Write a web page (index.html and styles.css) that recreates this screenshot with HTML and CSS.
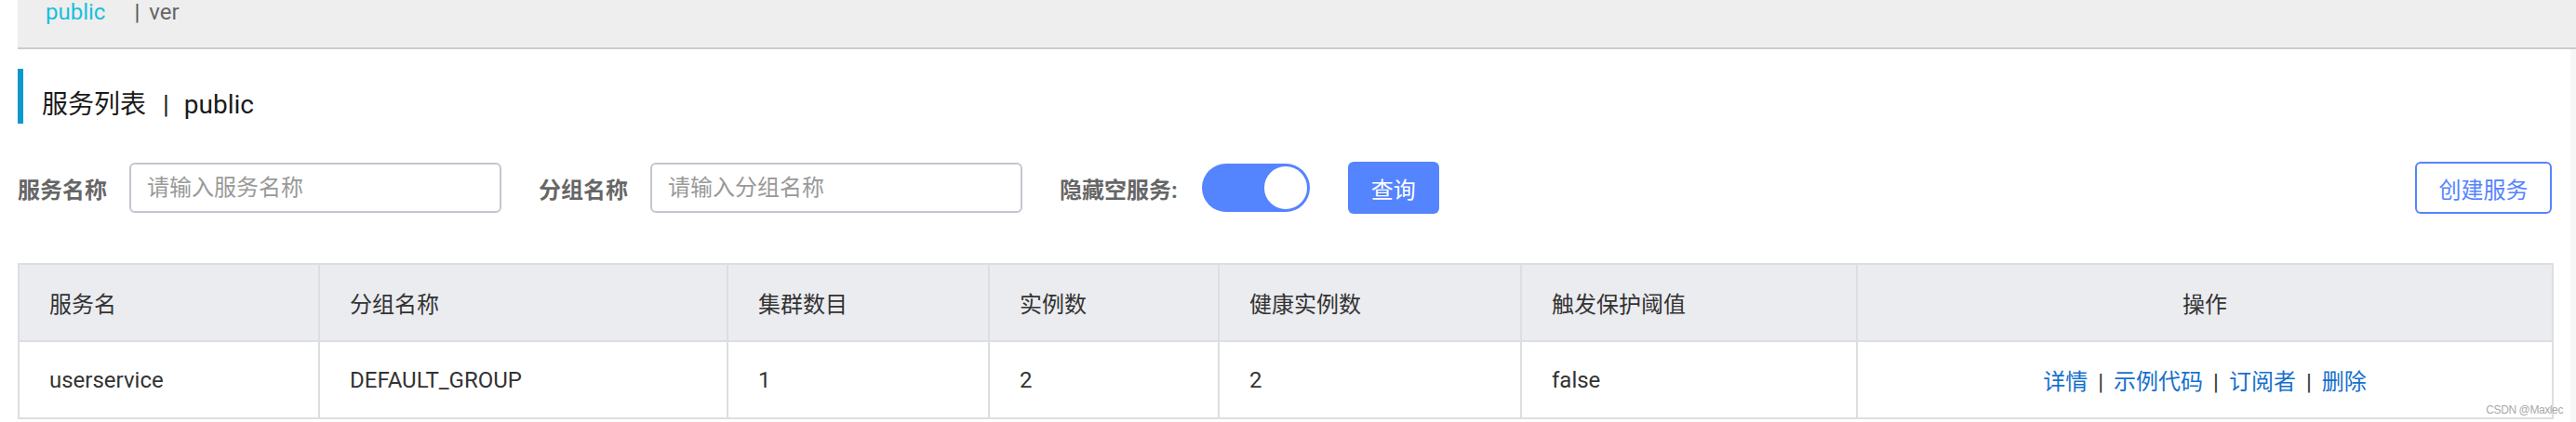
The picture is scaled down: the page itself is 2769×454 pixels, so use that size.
FILE: index.html
```html
<!DOCTYPE html>
<html lang="zh-CN">
<head>
<meta charset="utf-8">
<title>服务列表</title>
<link rel="stylesheet" href="styles.css">
</head>
<body>
<div class="topbar">
  <span class="ns-active">public</span><span class="ns-sep">|</span><span class="ns-item">ver</span>
</div>
<main class="page">
  <h1 class="page-title"><span>服务列表</span><span class="title-sep">|</span><span>public</span></h1>
  <div class="filters">
    <label class="f-label">服务名称</label>
    <input class="f-input" type="text" placeholder="请输入服务名称">
    <label class="f-label f-gap">分组名称</label>
    <input class="f-input" type="text" placeholder="请输入分组名称">
    <label class="f-label f-gap">隐藏空服务:</label>
    <span class="switch"><span class="knob"></span></span>
    <button class="btn-primary">查询</button>
    <span class="spacer"></span>
    <button class="btn-outline">创建服务</button>
  </div>
  <table class="svc-table">
    <colgroup>
      <col class="c1"><col class="c2"><col class="c3"><col class="c4"><col class="c5"><col class="c6"><col class="c7">
    </colgroup>
    <thead>
      <tr>
        <th>服务名</th><th>分组名称</th><th>集群数目</th><th>实例数</th><th>健康实例数</th><th>触发保护阈值</th><th class="center">操作</th>
      </tr>
    </thead>
    <tbody>
      <tr>
        <td>userservice</td><td>DEFAULT_GROUP</td><td>1</td><td>2</td><td>2</td><td>false</td>
        <td class="center"><a class="op">详情</a><span class="op-sep">|</span><a class="op">示例代码</a><span class="op-sep">|</span><a class="op">订阅者</a><span class="op-sep">|</span><a class="op">删除</a></td>
      </tr>
    </tbody>
  </table>
</main>
<div class="watermark">CSDN @Maxlec</div>
<div class="edge"></div>
</body>
</html>
```
FILE: styles.css
```css
html, body {
  margin: 0;
  padding: 0;
  background: #fff;
}
body {
  font-family: Roboto, "Noto Sans CJK SC", sans-serif;
  color: #333;
  width: 2769px;
  height: 454px;
  overflow: hidden;
  position: relative;
}
.topbar {
  margin-left: 19px;
  height: 51px;
  background: #eeeeee;
  border-bottom: 2px solid #cccccc;
  padding-left: 30px;
  font-size: 24px;
  line-height: 26px;
  box-sizing: content-box;
}
.ns-active { color: #19bfdc; }
.ns-sep { color: #555; margin-left: 31px; }
.ns-item { color: #666; margin-left: 10px; }

.page {
  padding: 0 26px 0 19px;
}
.page-title {
  margin: 21px 0 0 0;
  height: 59px;
  box-sizing: border-box;
  border-left: 6px solid #0a98cf;
  padding: 22px 0 0 20px;
  font-size: 28px;
  line-height: 34px;
  font-weight: normal;
  color: #1a1a1a;
  display: flex;
}
.title-sep { margin: 0 16px 0 18px; }

.filters {
  margin-top: 41px;
  height: 56px;
  display: flex;
  align-items: center;
}
.f-label {
  font-size: 24px;
  font-weight: 700;
  color: #666;
  margin-right: 24px;
  white-space: nowrap;
}
.f-gap { margin-left: 40px; }
.f-input {
  width: 400px;
  height: 54px;
  box-sizing: border-box;
  border: 2px solid #c4c6cf;
  border-radius: 6px;
  padding: 0 17px;
  font-size: 24px;
  font-family: Roboto, "Noto Sans CJK SC", sans-serif;
  color: #333;
  outline: none;
}
.f-input::placeholder { color: #999; }
.switch {
  width: 116px;
  height: 52px;
  border-radius: 26px;
  background: #5584ff;
  display: flex;
  align-items: center;
  justify-content: flex-end;
  margin-left: 2px;
  box-sizing: border-box;
  padding-right: 1px;
}
.knob {
  width: 50px;
  height: 50px;
  border-radius: 50%;
  background: #fff;
  box-sizing: border-box;
  border: 2px solid #5584ff;
}
.btn-primary {
  margin-left: 41px;
  width: 98px;
  height: 56px;
  border: none;
  border-radius: 6px;
  background: #5584ff;
  color: #fff;
  font-size: 24px;
  font-family: Roboto, "Noto Sans CJK SC", sans-serif;
  padding: 0;
}
.spacer { flex: 1; }
.btn-outline {
  width: 147px;
  height: 56px;
  box-sizing: border-box;
  border: 2px solid #5584ff;
  border-radius: 6px;
  background: #fff;
  color: #5584ff;
  font-size: 24px;
  font-family: Roboto, "Noto Sans CJK SC", sans-serif;
  padding: 0;
}

.svc-table {
  margin-top: 53px;
  width: 2724px;
  table-layout: fixed;
  border-collapse: collapse;
  border: 2px solid #dcdee3;
  font-size: 24px;
}
.c1 { width: 323px; }
.c2 { width: 439px; }
.c3 { width: 281px; }
.c4 { width: 247px; }
.c5 { width: 325px; }
.c6 { width: 361px; }
.c7 { width: 748px; }
.svc-table th, .svc-table td {
  border: 2px solid #dcdee3;
  height: 83px;
  padding: 0 32px;
  text-align: left;
  font-weight: normal;
  color: #333;
  white-space: nowrap;
  box-sizing: border-box;
}
.svc-table th { background: #ebecf0; }
.svc-table .center { text-align: center; }
.op { color: #1570cc; }
.op-sep { color: #333; margin: 0 11px; }

.watermark {
  position: absolute;
  right: 14px;
  bottom: 6px;
  font-size: 12px;
  color: #a9a9a9;
  font-family: "Liberation Sans", sans-serif;
  letter-spacing: -0.4px;
}
.edge {
  position: absolute;
  top: 53px;
  right: 0;
  width: 6px;
  bottom: 0;
  background: #f7f7f7;
}
```
